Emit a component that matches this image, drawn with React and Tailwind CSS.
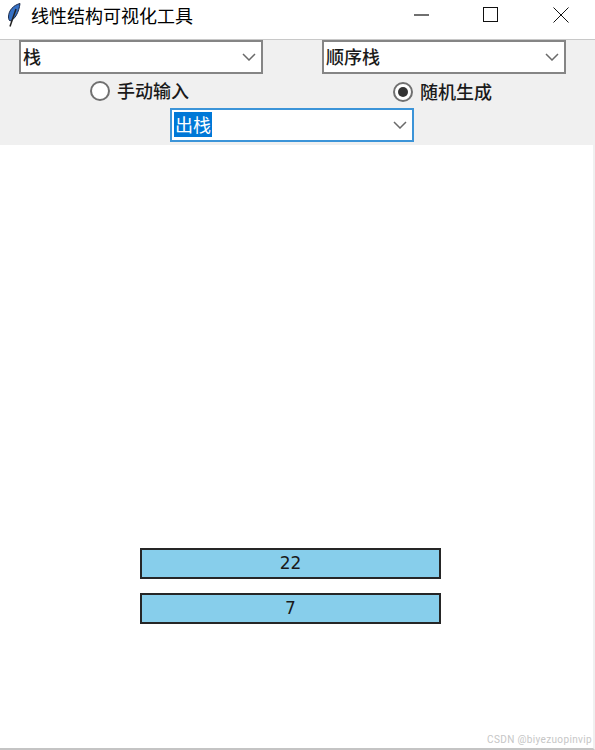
const font = { fontFamily: '"Noto Sans CJK SC", "Liberation Sans", sans-serif' };

function Chevron() {
  return (
    <svg width="14" height="8" viewBox="0 0 14 8" fill="none" stroke="#6a6a6a" strokeWidth="1.5">
      <path d="M1 1l6 6 6-6" />
    </svg>
  );
}

function Combo({ text, focused }) {
  return (
    <div
      className={
        "flex h-[34px] w-[244px] items-center justify-between border-2 bg-white pl-[2px] pr-[5px] text-[18px] leading-none font-medium text-[#1a1a1a] " +
        (focused ? "border-[#3c94d8]" : "border-[#858585]")
      }
    >
      {focused ? (
        <span className="mt-[-1px] bg-[#0078d7] px-px pt-[3px] pb-[4px] font-normal text-white">{text}</span>
      ) : (
        <span className="mt-[-3px]">{text}</span>
      )}
      <Chevron />
    </div>
  );
}

function Radio({ label, checked }) {
  return (
    <div className="flex items-center gap-[7px] text-[18px] leading-none font-medium text-[#1a1a1a]">
      <span className="flex h-[20px] w-[20px] items-center justify-center rounded-full border-2 border-[#707070] bg-white">
        {checked && <span className="h-[10px] w-[10px] rounded-full bg-[#333333]" />}
      </span>
      <span className="mt-[-2px]">{label}</span>
    </div>
  );
}

function StackItem({ value }) {
  return (
    <div
      className="flex h-[31px] w-[301px] items-center justify-center border-2 border-[#262626] bg-[#87ceeb] text-[17px] leading-none text-[#1a1a1a]"
      style={{ fontFamily: '"DejaVu Sans", sans-serif' }}
    >
      {value}
    </div>
  );
}

export default function App() {
  return (
    <div className="flex h-[750px] w-[595px] flex-col overflow-hidden bg-white" style={font}>
      {/* title bar */}
      <div className="flex h-[40px] shrink-0 items-center border-b border-[#c8c8c8] bg-white pb-[10px]">
        <svg className="ml-[7px]" width="14" height="24" viewBox="0 0 14 24">
          <path d="M13 .5C7 2 1.500 7 1.500 14c0 2 .5 3 1.500 4 5-1.500 9-9 10-17.500z" fill="#3570c4" stroke="#1c2c4c" strokeWidth="1" />
          <path d="M9 6L3 23.500" stroke="#222222" strokeWidth="1.500" />
        </svg>
        <span className="ml-[10px] text-[18px] leading-none text-black">线性结构可视化工具</span>
        <div className="ml-auto flex items-center">
          <svg width="16" height="16" viewBox="0 0 16 16" className="mr-[53px]"><path d="M0 8h15" stroke="#111111" strokeWidth="1.200" /></svg>
          <svg width="16" height="16" viewBox="0 0 16 16" className="mr-[54px]"><rect x=".5" y=".5" width="14" height="14" fill="none" stroke="#111111" /></svg>
          <svg width="16" height="16" viewBox="0 0 16 16" className="mr-[26px]"><path d="M.5.5l15 15M15.500.5l-15 15" stroke="#111111" /></svg>
        </div>
      </div>

      {/* controls */}
      <div className="flex h-[105px] shrink-0 flex-col bg-[#f0f0f0]">
        <div className="flex gap-[59px] pl-[19px]">
          <Combo text="栈" />
          <Combo text="顺序栈" />
        </div>
        <div className="mt-[7px] flex h-[22px] pl-[90px]">
          <div className="w-[303px]"><Radio label="手动输入" /></div>
          <Radio label="随机生成" checked />
        </div>
        <div className="mt-[5px] pl-[170px]">
          <Combo text="出栈" focused />
        </div>
      </div>

      {/* canvas */}
      <div className="relative flex flex-1 flex-col border-r-2 border-b-2 border-r-[#f0f0f0] border-b-[#c4c4c4]">
        <div className="mt-[403px] ml-[140px] flex flex-col gap-[14px]">
          <StackItem value="22" />
          <StackItem value="7" />
        </div>
        <span
          className="absolute right-[1px] bottom-[1px] text-[10px] leading-[14px] tracking-[0.35px] text-[#c6c6c6]"
          style={{ fontFamily: '"Roboto", sans-serif' }}
        >
          CSDN @biyezuopinvip
        </span>
      </div>
    </div>
  );
}
